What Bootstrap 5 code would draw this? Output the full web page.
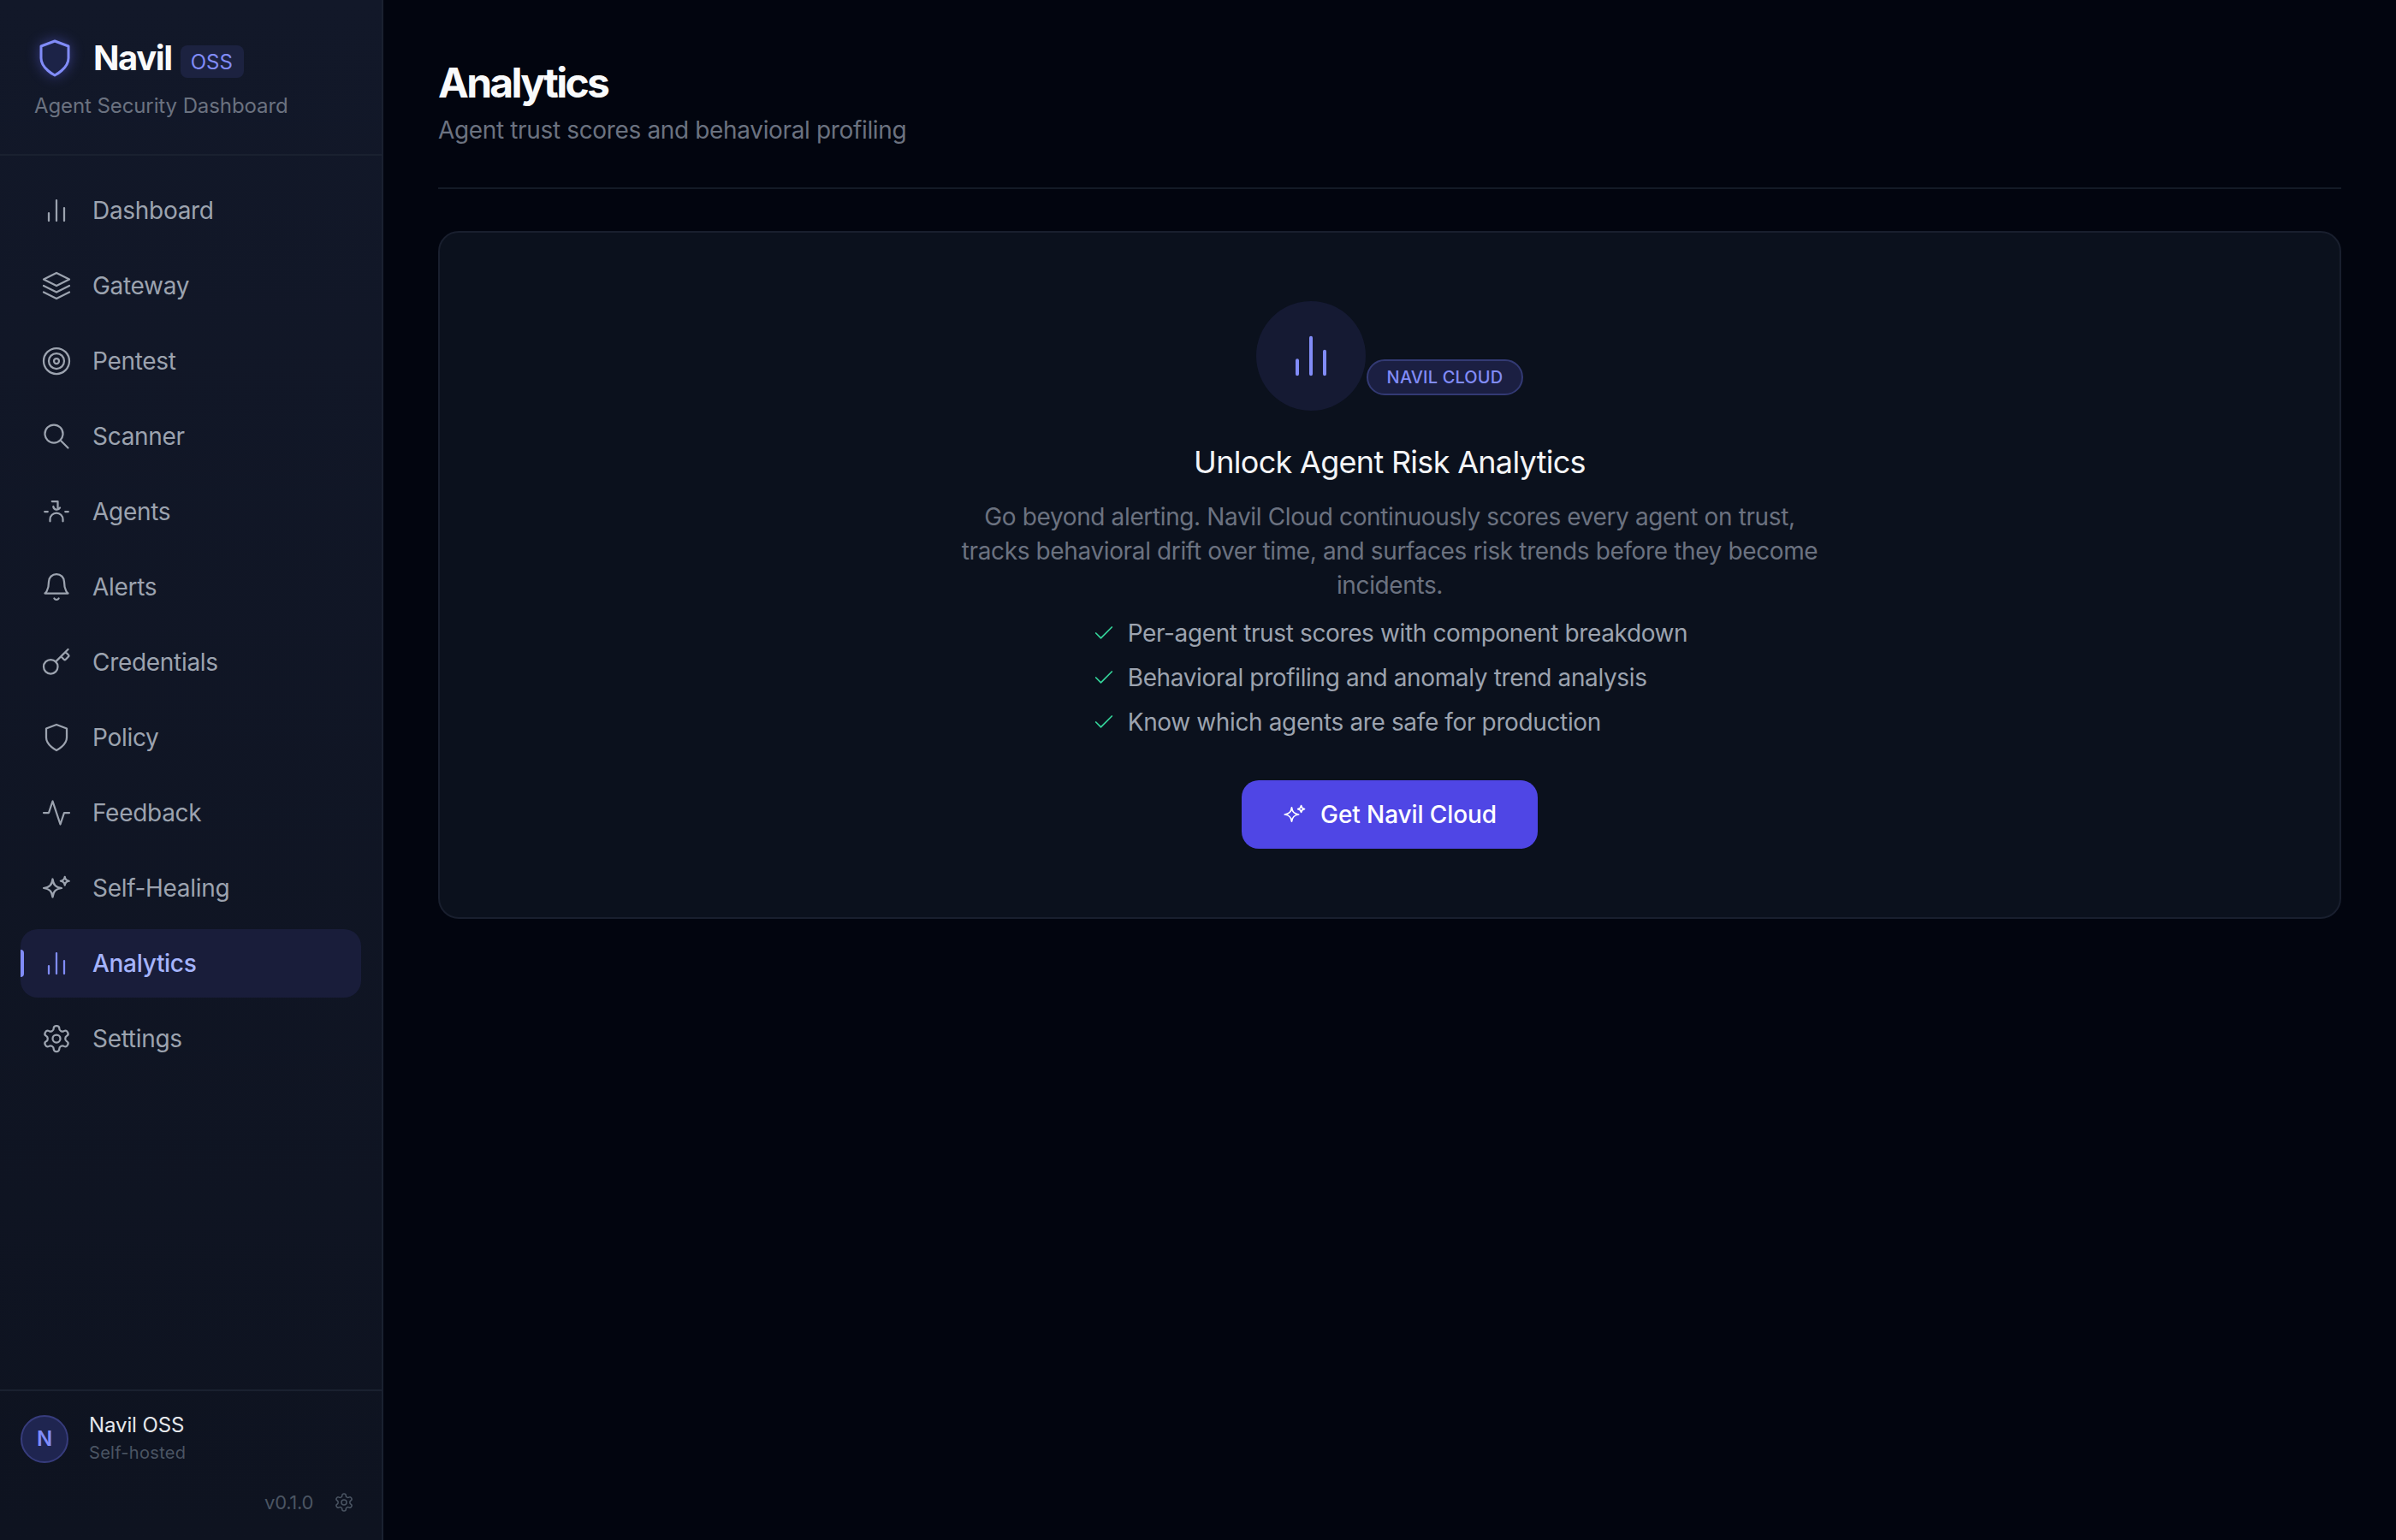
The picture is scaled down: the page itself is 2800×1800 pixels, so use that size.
<!DOCTYPE html>
<html lang="en">
<head>
  <meta charset="UTF-8" />
  <title>Navil OSS - Analytics</title>
  <meta name="viewport" content="width=device-width, initial-scale=1" />
  <link href="https://cdn.jsdelivr.net/npm/bootstrap@5.3.0/dist/css/bootstrap.min.css" rel="stylesheet">
  <style>
    body {
      background: #02050f;
      font-family: Inter, "Liberation Sans", sans-serif;
      font-weight: 375;
      height: 1800px;
      overflow: hidden;
    }
    svg.ico {
      fill: none;
      stroke: currentColor;
      stroke-width: 1.5;
      stroke-linecap: round;
      stroke-linejoin: round;
      flex-shrink: 0;
    }
    .side-bar {
      width: 448px;
      height: 1800px;
      background: linear-gradient(180deg, #121829 0%, #0e1320 100%);
      border-right: 2px solid #1a2130;
      flex-shrink: 0;
    }
    .brand-box {
      height: 182px;
      padding: 44px 40px 0;
      border-bottom: 2px solid #1a2130;
    }
    .brand-row { height: 48px; }
    .brand-logo {
      width: 48px;
      height: 48px;
      margin-right: 21px;
      color: #818cf8;
      filter: drop-shadow(0 0 8px rgba(99, 102, 241, .45));
    }
    .brand-name {
      font-size: 40px;
      font-weight: 700;
      letter-spacing: -1.4px;
      color: #f9fafb;
      line-height: 44px;
    }
    .oss-tag {
      margin-left: 10px;
      margin-top: 8px;
      padding: 0 13px 0 12px;
      height: 38px;
      line-height: 40px;
      font-size: 24px;
      color: #818cf8;
      background: #1c2240;
      border-radius: 8px;
    }
    .brand-sub {
      margin-top: 16px;
      font-size: 24px;
      line-height: 32px;
      letter-spacing: -.1px;
      color: #6b7280;
    }
    .side-nav { padding: 24px 24px 0; gap: 8px; }
    .side-link {
      height: 80px;
      padding-left: 24px;
      gap: 24px;
      font-size: 28px;
      letter-spacing: -.3px;
      color: #9ca3af;
      text-decoration: none;
      border-radius: 20px;
    }
    .side-link svg { width: 36px; height: 36px; }
    .side-link.is-active {
      background: #191d3a;
      color: #a5b4fc;
      font-weight: 500;
    }
    .side-link.is-active svg { color: #818cf8; }
    .side-link.is-active::before {
      content: "";
      position: absolute;
      left: 0;
      top: 24px;
      width: 4px;
      height: 32px;
      background: #818cf8;
      border-radius: 0 4px 4px 0;
    }
    .side-foot {
      height: 176px;
      padding: 24px 24px 0;
      border-top: 2px solid #1a2130;
    }
    .user-dot {
      width: 56px;
      height: 56px;
      border-radius: 50%;
      background: #1f2550;
      border: 2px solid #373c7c;
      color: #818cf8;
      font-size: 24px;
      font-weight: 600;
    }
    .user-name { font-size: 24px; line-height: 32px; letter-spacing: -.1px; color: #e5e7eb; }
    .user-kind { font-size: 20px; line-height: 32px; color: #4b5563; letter-spacing: .3px; }
    .foot-meta {
      margin-top: 26px;
      padding-right: 8px;
      gap: 24px;
      font-size: 22px;
      line-height: 32px;
      letter-spacing: -.3px;
      color: #4b5563;
    }
    .foot-meta svg { width: 24px; height: 24px; }
    .main-pane { padding: 65px 64px 0; }
    .page-title {
      font-size: 48px;
      font-weight: 700;
      letter-spacing: -2.7px;
      line-height: 64px;
      color: #f9fafb;
      margin: 0;
    }
    .page-sub {
      margin-top: 3px;
      font-size: 28px;
      line-height: 40px;
      letter-spacing: -.35px;
      color: #6b7280;
    }
    .page-head {
      height: 156px;
      border-bottom: 2px solid #141a26;
      margin-bottom: 49px;
    }
    .cloud-panel {
      background: #0b111d;
      border: 2px solid #191f2e;
      border-radius: 24px;
      padding: 80px 0;
    }
    .lock-circle {
      width: 128px;
      height: 128px;
      border-radius: 50%;
      background: #151a33;
      color: #818cf8;
    }
    .lock-circle svg { width: 64px; height: 64px; }
    .cloud-tag {
      height: 42px;
      margin-left: 1px;
      margin-bottom: 18px;
      padding: 0 22px;
      border: 2px solid #333a74;
      border-radius: 21px;
      background: #1b1f42;
      color: #818cf8;
      font-size: 20px;
      font-weight: 550;
      letter-spacing: .15px;
    }
    .cloud-title {
      margin: 36px 0 0;
      font-size: 36px;
      line-height: 48px;
      font-weight: 420;
      letter-spacing: -.7px;
      color: #f3f4f6;
    }
    .cloud-text {
      width: 1024px;
      margin: 20px 0 0;
      font-size: 28px;
      line-height: 40px;
      letter-spacing: -.37px;
      color: #6b7280;
    }
    .perk-list { margin: 16px 0 0; padding: 0; list-style: none; gap: 12px; }
    .perk-list li { line-height: 40px; font-size: 28px; letter-spacing: -.37px; color: #9ca3af; gap: 14px; }
    .perk-list svg { width: 28px; height: 28px; color: #34d399; }
    .cloud-btn {
      margin-top: 48px;
      height: 80px;
      padding: 0 48px;
      gap: 16px;
      background: #4f46e5;
      border: 0;
      border-radius: 20px;
      color: #fff;
      font-size: 28px;
      font-weight: 450;
      letter-spacing: -.1px;
    }
    .cloud-btn svg { width: 28px; height: 28px; }
  </style>
</head>
<body>

<svg width="0" height="0" class="position-absolute">
  <defs>
    <symbol id="i-bars" viewBox="0 0 24 24"><path d="M18 20V10M12 20V4M6 20v-6"/></symbol>
    <symbol id="i-layers" viewBox="0 0 24 24"><path d="M12 2 2 7l10 5 10-5-10-5zM2 17l10 5 10-5M2 12l10 5 10-5"/></symbol>
    <symbol id="i-target" viewBox="0 0 24 24"><circle cx="12" cy="12" r="10"/><circle cx="12" cy="12" r="6"/><circle cx="12" cy="12" r="2"/></symbol>
    <symbol id="i-search" viewBox="0 0 24 24"><circle cx="10" cy="10" r="7"/><path d="m21 21-6-6"/></symbol>
    <symbol id="i-agent" viewBox="0 0 24 24"><path d="M8.500 4H13v5M9.500 8a2.800 2.800 0 0 0 5.200 1M7 19.500V18a5 5 0 0 1 10 0v1.500M2.800 12h2.400M18.800 12h2.400"/></symbol>
    <symbol id="i-bell" viewBox="0 0 24 24"><path d="M18 8A6 6 0 0 0 6 8c0 7-3 9-3 9h18s-3-2-3-9M13.730 21a2 2 0 0 1-3.460 0"/></symbol>
    <symbol id="i-key" viewBox="0 0 24 24"><path d="m15.500 7.500 2.300 2.300a1 1 0 0 0 1.400 0l2.100-2.100a1 1 0 0 0 0-1.400L19 4M21 2l-9.600 9.600"/><circle cx="7.500" cy="15.500" r="5.500"/></symbol>
    <symbol id="i-shield" viewBox="0 0 24 24"><path d="M12 22s8-4 8-10V5l-8-3-8 3v7c0 6 8 10 8 10z"/></symbol>
    <symbol id="i-pulse" viewBox="0 0 24 24"><path d="M22 12h-4l-3 9L9 3l-3 9H2"/></symbol>
    <symbol id="i-spark" viewBox="0 0 24 24"><path d="M9 5c.6 4.600 2.400 6.400 7 7-4.600.6-6.400 2.400-7 7-.6-4.600-2.400-6.400-7-7 4.600-.6 6.400-2.400 7-7zM18.500 3.200c.3 2.200 1.100 3 3.300 3.300-2.200.3-3 1.100-3.300 3.300-.3-2.200-1.100-3-3.300-3.300 2.200-.3 3-1.100 3.300-3.300z"/></symbol>
    <symbol id="i-gear" viewBox="0 0 24 24"><path d="M12.220 2h-.44a2 2 0 0 0-2 2v.18a2 2 0 0 1-1 1.730l-.43.25a2 2 0 0 1-2 0l-.15-.08a2 2 0 0 0-2.730.73l-.22.38a2 2 0 0 0 .73 2.730l.15.1a2 2 0 0 1 1 1.720v.51a2 2 0 0 1-1 1.740l-.15.09a2 2 0 0 0-.73 2.730l.22.38a2 2 0 0 0 2.730.73l.15-.08a2 2 0 0 1 2 0l.43.25a2 2 0 0 1 1 1.730V20a2 2 0 0 0 2 2h.44a2 2 0 0 0 2-2v-.18a2 2 0 0 1 1-1.730l.43-.25a2 2 0 0 1 2 0l.15.08a2 2 0 0 0 2.730-.73l.22-.39a2 2 0 0 0-.73-2.730l-.15-.08a2 2 0 0 1-1-1.740v-.5a2 2 0 0 1 1-1.740l.15-.09a2 2 0 0 0 .73-2.730l-.22-.38a2 2 0 0 0-2.730-.73l-.15.08a2 2 0 0 1-2 0l-.43-.25a2 2 0 0 1-1-1.730V4a2 2 0 0 0-2-2z"/><circle cx="12" cy="12" r="3"/></symbol>
    <symbol id="i-check" viewBox="0 0 24 24"><path d="M20 6 9 17l-5-5"/></symbol>
  </defs>
</svg>

<div class="d-flex">
  <!-- Sidebar -->
  <aside class="side-bar d-flex flex-column">
    <div class="brand-box">
      <div class="brand-row d-flex align-items-center">
        <svg class="ico brand-logo" viewBox="0 0 24 24"><path d="M12 22s8-4 8-10V5l-8-3-8 3v7c0 6 8 10 8 10z" fill="#1c2347"/></svg>
        <span class="brand-name">Navil</span>
        <span class="oss-tag">OSS</span>
      </div>
      <div class="brand-sub">Agent Security Dashboard</div>
    </div>

    <nav class="side-nav d-flex flex-column">
      <a href="#" class="side-link d-flex align-items-center"><svg class="ico"><use href="#i-bars"/></svg>Dashboard</a>
      <a href="#" class="side-link d-flex align-items-center"><svg class="ico"><use href="#i-layers"/></svg>Gateway</a>
      <a href="#" class="side-link d-flex align-items-center"><svg class="ico"><use href="#i-target"/></svg>Pentest</a>
      <a href="#" class="side-link d-flex align-items-center"><svg class="ico"><use href="#i-search"/></svg>Scanner</a>
      <a href="#" class="side-link d-flex align-items-center"><svg class="ico"><use href="#i-agent"/></svg>Agents</a>
      <a href="#" class="side-link d-flex align-items-center"><svg class="ico"><use href="#i-bell"/></svg>Alerts</a>
      <a href="#" class="side-link d-flex align-items-center"><svg class="ico"><use href="#i-key"/></svg>Credentials</a>
      <a href="#" class="side-link d-flex align-items-center"><svg class="ico"><use href="#i-shield"/></svg>Policy</a>
      <a href="#" class="side-link d-flex align-items-center"><svg class="ico"><use href="#i-pulse"/></svg>Feedback</a>
      <a href="#" class="side-link d-flex align-items-center"><svg class="ico"><use href="#i-spark"/></svg>Self-Healing</a>
      <a href="#" class="side-link is-active position-relative d-flex align-items-center"><svg class="ico"><use href="#i-bars"/></svg>Analytics</a>
      <a href="#" class="side-link d-flex align-items-center"><svg class="ico"><use href="#i-gear"/></svg>Settings</a>
    </nav>

    <div class="side-foot mt-auto">
      <div class="d-flex align-items-center gap-4">
        <div class="user-dot d-flex align-items-center justify-content-center">N</div>
        <div>
          <div class="user-name">Navil OSS</div>
          <div class="user-kind">Self-hosted</div>
        </div>
      </div>
      <div class="foot-meta d-flex align-items-center justify-content-end">
        <span>v0.1.0</span>
        <svg class="ico"><use href="#i-gear"/></svg>
      </div>
    </div>
  </aside>

  <!-- Main -->
  <main class="main-pane flex-grow-1">
    <div class="page-head">
      <h1 class="page-title">Analytics</h1>
      <div class="page-sub">Agent trust scores and behavioral profiling</div>
    </div>

    <div class="cloud-panel d-flex flex-column align-items-center text-center">
      <div class="d-flex align-items-end">
        <div class="lock-circle d-flex align-items-center justify-content-center">
          <svg class="ico"><use href="#i-bars"/></svg>
        </div>
        <span class="cloud-tag d-flex align-items-center">NAVIL CLOUD</span>
      </div>
      <h2 class="cloud-title">Unlock Agent Risk Analytics</h2>
      <p class="cloud-text">Go beyond alerting. Navil Cloud continuously scores every agent on trust, tracks behavioral drift over time, and surfaces risk trends before they become incidents.</p>
      <ul class="perk-list d-flex flex-column">
        <li class="d-flex align-items-center"><svg class="ico"><use href="#i-check"/></svg>Per-agent trust scores with component breakdown</li>
        <li class="d-flex align-items-center"><svg class="ico"><use href="#i-check"/></svg>Behavioral profiling and anomaly trend analysis</li>
        <li class="d-flex align-items-center"><svg class="ico"><use href="#i-check"/></svg>Know which agents are safe for production</li>
      </ul>
      <button type="button" class="btn cloud-btn d-flex align-items-center"><svg class="ico"><use href="#i-spark"/></svg>Get Navil Cloud</button>
    </div>
  </main>
</div>

<script src="https://cdn.jsdelivr.net/npm/bootstrap@5.3.0/dist/js/bootstrap.bundle.min.js"></script>
</body>
</html>
